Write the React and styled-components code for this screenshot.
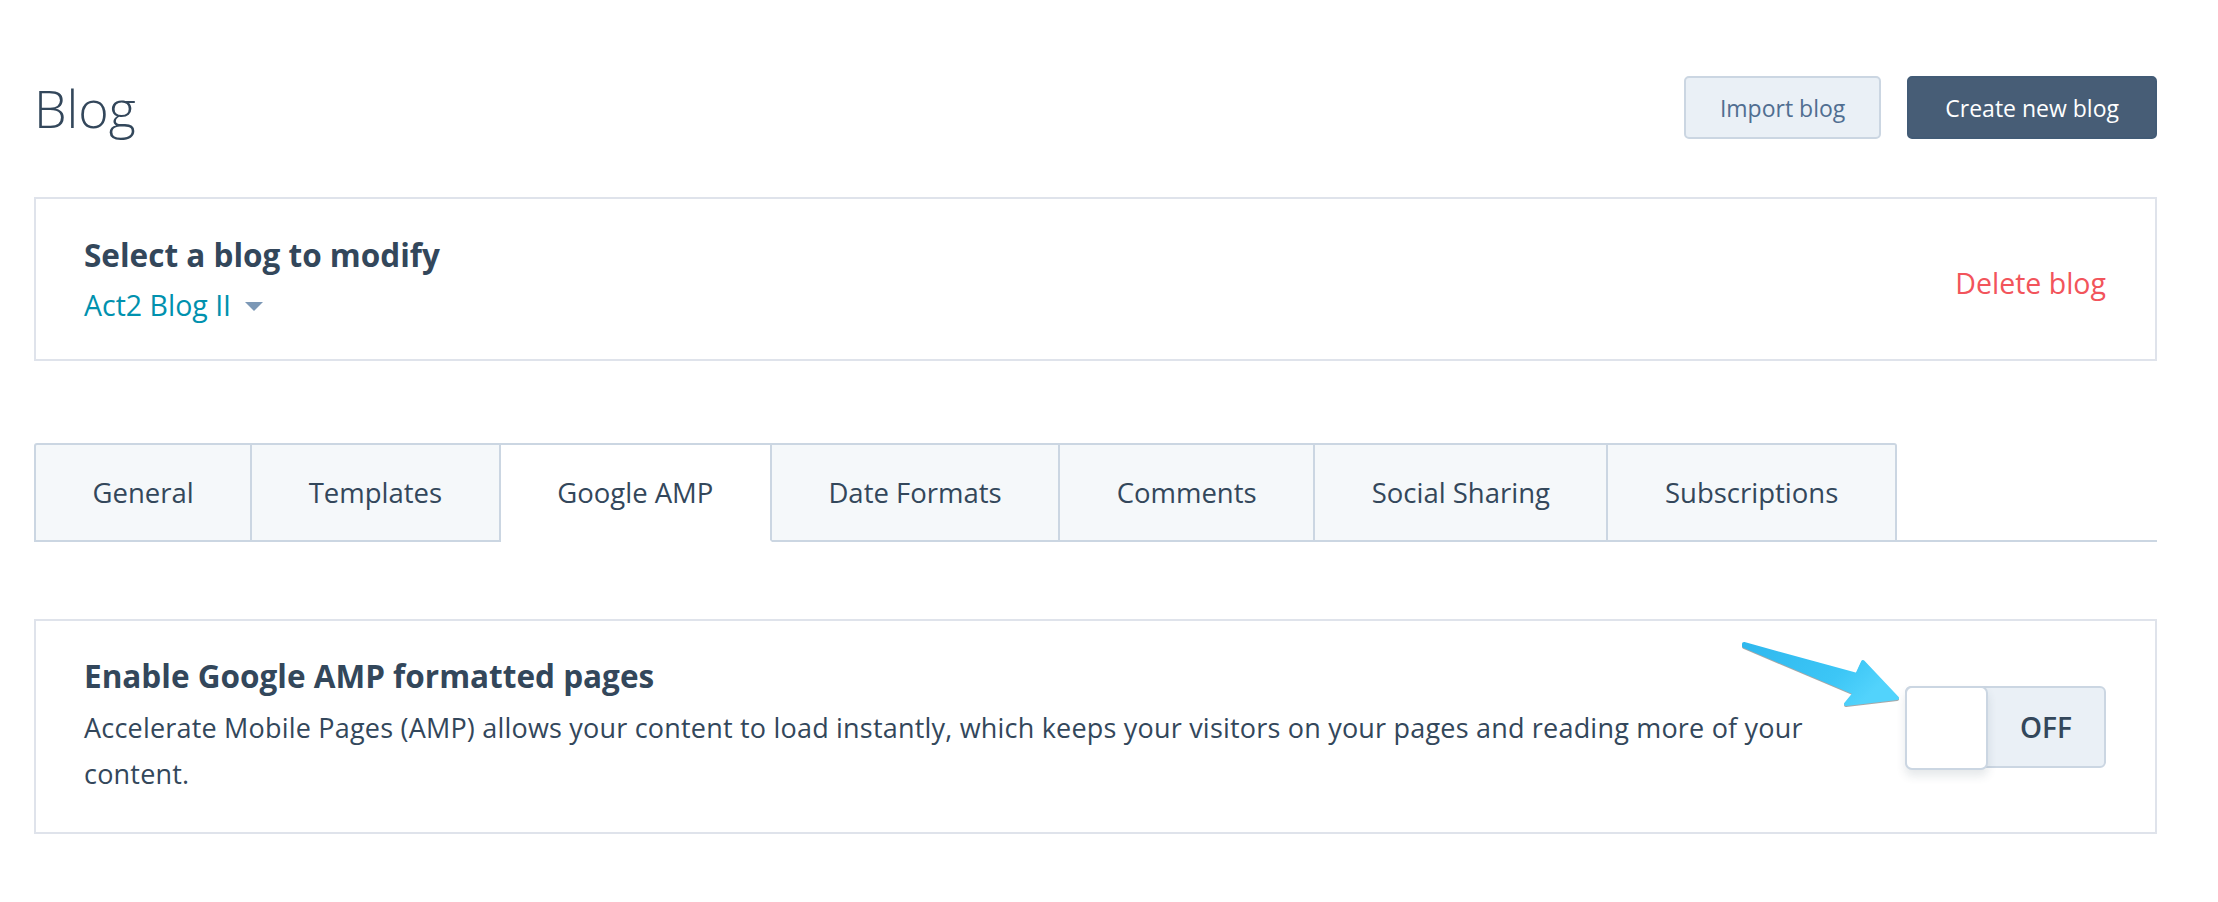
import React from "react";
import styled, { createGlobalStyle } from "styled-components";

const GlobalStyle = createGlobalStyle`
  html, body {
    margin: 0;
    padding: 0;
    background: #ffffff;
  }
  body {
    font-family: "Open Sans", "Noto Sans", sans-serif;
    color: #33475b;
  }
`;

const Page = styled.div`
  padding: 76px 61px 60px 34px;
`;

const Header = styled.header`
  display: flex;
  align-items: center;
  justify-content: space-between;
  height: 63px;
`;

const Title = styled.h1`
  margin: 0;
  font-size: 52px;
  font-weight: 300;
  line-height: 1;
  color: #33475b;
`;

const Actions = styled.div`
  display: flex;
  gap: 26px;
`;

const Button = styled.button`
  height: 63px;
  padding: 0 ${(p) => (p.$primary ? "36px" : "34px")};
  border-radius: 5px;
  font-family: inherit;
  font-size: 23px;
  font-weight: 400;
  cursor: pointer;
  border: 2px solid ${(p) => (p.$primary ? "#425b76" : "#cbd6e2")};
  background: ${(p) => (p.$primary ? "#475d76" : "#eaf0f6")};
  color: ${(p) => (p.$primary ? "#ffffff" : "#506e91")};
`;

const Card = styled.section`
  display: flex;
  align-items: center;
  justify-content: space-between;
  border: 2px solid #dfe3eb;
  background: #ffffff;
  position: relative;
`;

const SelectCard = styled(Card)`
  margin-top: 58px;
  height: 164px;
  box-sizing: border-box;
  padding: 0 49px 0 48px;
`;

const CardTitle = styled.h2`
  margin: 0;
  font-size: 31.5px;
  line-height: 40px;
  font-weight: 700;
  color: #33475b;
`;

const BlogPicker = styled.div`
  display: flex;
  align-items: center;
  gap: 14px;
  margin-top: 12px;
  font-size: 28.5px;
  line-height: 36px;
  color: #0091ae;
`;

const Caret = styled.span`
  width: 0;
  height: 0;
  border-left: 9px solid transparent;
  border-right: 9px solid transparent;
  border-top: 9px solid #7c98b6;
  margin-top: 2px;
`;

const DangerLink = styled.a`
  font-size: 28.5px;
  line-height: 36px;
  color: #f2545b;
  margin-top: 8px;
`;

const TabList = styled.nav`
  display: flex;
  margin-top: 82px;
  height: 99px;
`;

const Tab = styled.div`
  display: flex;
  align-items: center;
  padding: 0 56.5px;
  font-size: 27.5px;
  color: #33475b;
  background: ${(p) => (p.$active ? "#ffffff" : "#f5f8fa")};
  border-top: 2px solid #cbd6e2;
  border-right: 2px solid #cbd6e2;
  border-left: ${(p) => (p.$first ? "2px solid #cbd6e2" : "none")};
  border-bottom: 2px solid ${(p) => (p.$active ? "#ffffff" : "#cbd6e2")};
  border-top-left-radius: ${(p) => (p.$first ? "3px" : "0")};
  border-top-right-radius: ${(p) => (p.$last ? "3px" : "0")};
`;

const TabFiller = styled.div`
  flex: 1;
  border-bottom: 2px solid #cbd6e2;
`;

const SettingCard = styled(Card)`
  margin-top: 77px;
  padding: 35px 49px 35px 48px;
`;

const SettingText = styled.div`
  flex: 1;
  padding-right: 90px;
`;

const Description = styled.p`
  margin: 9px 0 0;
  font-size: 27px;
  letter-spacing: 0.2px;
  line-height: 46px;
  color: #33475b;
`;

const Toggle = styled.div`
  display: flex;
  width: 201px;
  height: 82px;
  box-sizing: border-box;
  border: 2px solid #cbd6e2;
  border-radius: 6px;
  background: #eaf0f6;
  position: relative;
`;

const Knob = styled.div`
  width: 83px;
  height: 84px;
  margin: -2px 0 0 -2px;
  box-sizing: border-box;
  border: 2px solid #cbd6e2;
  border-radius: 7px;
  background: #ffffff;
  box-shadow: 0 6px 10px rgba(45, 62, 80, 0.12);
`;

const ToggleLabel = styled.span`
  flex: 1;
  display: flex;
  align-items: center;
  justify-content: center;
  font-size: 28px;
  font-weight: 600;
  color: #33475b;
`;

const Pointer = styled.svg`
  position: absolute;
  left: 1700px;
  top: 15px;
  filter: drop-shadow(0 1px 0.6px rgba(60, 60, 60, 0.45));
`;

const tabs = [
  "General",
  "Templates",
  "Google AMP",
  "Date Formats",
  "Comments",
  "Social Sharing",
  "Subscriptions",
];

export default function App() {
  return (
    <>
      <GlobalStyle />
      <Page>
        <Header>
          <Title>Blog</Title>
          <Actions>
            <Button>Import blog</Button>
            <Button $primary>Create new blog</Button>
          </Actions>
        </Header>

        <SelectCard>
          <div>
            <CardTitle>Select a blog to modify</CardTitle>
            <BlogPicker>
              Act2 Blog II
              <Caret />
            </BlogPicker>
          </div>
          <DangerLink>Delete blog</DangerLink>
        </SelectCard>

        <TabList>
          {tabs.map((t, i) => (
            <Tab
              key={t}
              $first={i === 0}
              $last={i === tabs.length - 1}
              $active={t === "Google AMP"}
            >
              {t}
            </Tab>
          ))}
          <TabFiller />
        </TabList>

        <SettingCard>
          <SettingText>
            <CardTitle>Enable Google AMP formatted pages</CardTitle>
            <Description>
              Accelerate Mobile Pages (AMP) allows your content to load
              instantly, which keeps your visitors on your pages and reading
              more of your content.
            </Description>
          </SettingText>
          <Toggle>
            <Knob />
            <ToggleLabel>OFF</ToggleLabel>
          </Toggle>
          <Pointer width="170" height="80" viewBox="0 0 170 80">
            <defs>
              <linearGradient id="arrowFill" x1="0" y1="0" x2="1" y2="0.4">
                <stop offset="0" stopColor="#2fb8ee" />
                <stop offset="0.7" stopColor="#3cc6f6" />
                <stop offset="1" stopColor="#52d3fc" />
              </linearGradient>
            </defs>
            <path
              d="M8 8 L121 39 L127 26 L161 62 L110 68 L119 57 L8 10 Z"
              fill="url(#arrowFill)"
              stroke="url(#arrowFill)"
              strokeWidth="4"
              strokeLinejoin="round"
            />
          </Pointer>
        </SettingCard>
      </Page>
    </>
  );
}
